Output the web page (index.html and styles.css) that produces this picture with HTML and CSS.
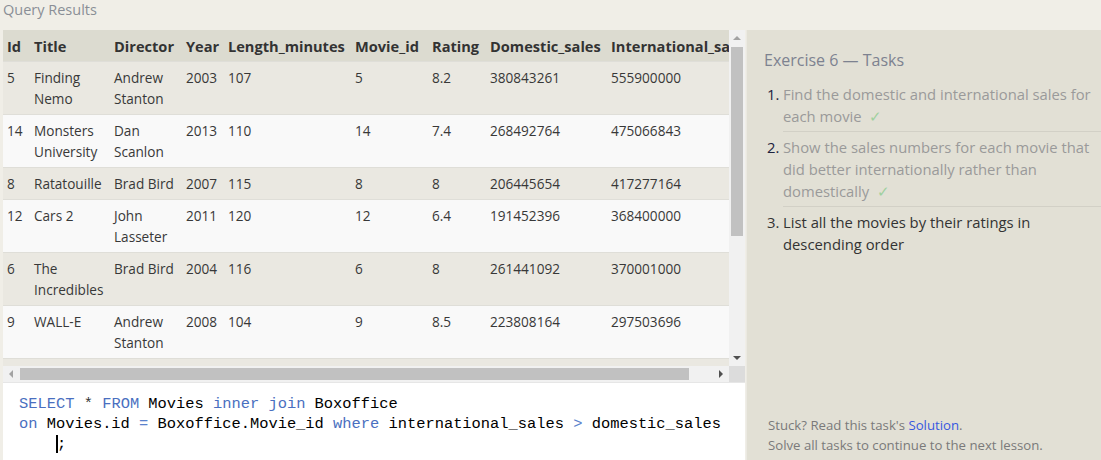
FILE: index.html
```html
<!DOCTYPE html>
<html>
<head>
<meta charset="utf-8">
<link rel="stylesheet" href="styles.css">
</head>
<body>
<div class="topbar">Query Results</div>
<div class="main">
  <div class="left">
    <div class="results">
      <div class="viewport">
        <table class="grid">
          <colgroup>
            <col class="c-id"><col class="c-title"><col class="c-dir"><col class="c-year"><col class="c-len"><col class="c-mid"><col class="c-rat"><col class="c-dom"><col class="c-int">
          </colgroup>
          <thead>
            <tr><th>Id</th><th>Title</th><th>Director</th><th>Year</th><th>Length_minutes</th><th>Movie_id</th><th>Rating</th><th>Domestic_sales</th><th>International_sales</th></tr>
          </thead>
          <tbody>
            <tr><td>5</td><td>Finding Nemo</td><td>Andrew Stanton</td><td>2003</td><td>107</td><td>5</td><td>8.2</td><td>380843261</td><td>555900000</td></tr>
            <tr><td>14</td><td>Monsters University</td><td>Dan Scanlon</td><td>2013</td><td>110</td><td>14</td><td>7.4</td><td>268492764</td><td>475066843</td></tr>
            <tr><td>8</td><td>Ratatouille</td><td>Brad Bird</td><td>2007</td><td>115</td><td>8</td><td>8</td><td>206445654</td><td>417277164</td></tr>
            <tr><td>12</td><td>Cars 2</td><td>John Lasseter</td><td>2011</td><td>120</td><td>12</td><td>6.4</td><td>191452396</td><td>368400000</td></tr>
            <tr><td>6</td><td>The Incredibles</td><td>Brad Bird</td><td>2004</td><td>116</td><td>6</td><td>8</td><td>261441092</td><td>370001000</td></tr>
            <tr><td>9</td><td>WALL-E</td><td>Andrew Stanton</td><td>2008</td><td>104</td><td>9</td><td>8.5</td><td>223808164</td><td>297503696</td></tr>
          </tbody>
        </table>
      </div>
      <div class="vbar">
        <div class="arrow up dim"></div>
        <div class="vtrack"><div class="vthumb"></div></div>
        <div class="arrow down"></div>
      </div>
      <div class="hbar">
        <div class="arrow leftarr dim"></div>
        <div class="htrack"><div class="hthumb"></div></div>
        <div class="arrow rightarr"></div>
      </div>
      <div class="corner"></div>
    </div>
    <div class="editor">
      <div class="line"><span class="kw">SELECT</span> <span class="op-dark">*</span> <span class="kw">FROM</span> Movies <span class="kw">inner join</span> Boxoffice</div>
      <div class="line"><span class="kw">on</span> Movies.id <span class="op">=</span> Boxoffice.Movie_id <span class="kw">where</span> international_sales <span class="op">&gt;</span> domestic_sales</div>
      <div class="line">    <span class="cursor"></span>;</div>
    </div>
  </div>
  <div class="right">
    <h2 class="ex-title">Exercise 6 — Tasks</h2>
    <ol class="tasks">
      <li class="task done"><span class="num">1.</span><div class="task-text">Find the domestic and international sales for each movie <span class="check">✓</span></div></li>
      <li class="task done"><span class="num">2.</span><div class="task-text">Show the sales numbers for each movie that did better internationally rather than domestically <span class="check">✓</span></div></li>
      <li class="task active"><span class="num">3.</span><div class="task-text">List all the movies by their ratings in descending order</div></li>
    </ol>
    <div class="help">
      <div>Stuck? Read this task's <a class="sol">Solution</a>.</div>
      <div>Solve all tasks to continue to the next lesson.</div>
    </div>
  </div>
</div>
</body>
</html>
```

FILE: styles.css
```css
* { box-sizing: border-box; }
html, body { margin: 0; padding: 0; }
body {
  width: 1101px;
  height: 460px;
  overflow: hidden;
  background: #f0eee7;
  font-family: "Open Sans", "Noto Sans", sans-serif;
  color: #333;
}
.topbar {
  height: 30px;
  padding: 0 3px;
  font-size: 14.5px;
  line-height: 20px;
  color: #8a8e96;
}
.main {
  display: flex;
  height: 430px;
}
.left {
  width: 746px;
  padding-left: 3px;
  padding-right: 1px;
  display: flex;
  flex-direction: column;
}
.results {
  display: grid;
  grid-template-columns: 726px 16px;
  grid-template-rows: 336px 16px;
  border-bottom: 1px solid #e6e6e6;
}
.viewport {
  overflow: hidden;
  background: #eae8e1;
}
.grid {
  border-collapse: collapse;
  table-layout: fixed;
  width: 766px;
  font-size: 13.6px;
  line-height: 21px;
}
.c-id { width: 27px; }
.c-title { width: 80px; }
.c-dir { width: 72px; }
.c-year { width: 42px; }
.c-len { width: 127px; }
.c-mid { width: 77px; }
.c-rat { width: 58px; }
.c-dom { width: 121px; }
.c-int { width: 162px; }
.grid th, .grid td {
  text-align: left;
  vertical-align: top;
  padding: 5px 4px;
  border-bottom: 1px solid #dfded8;
}
.grid th {
  background: #dcdbd0;
  font-weight: 700;
  font-size: 14.6px;
  line-height: 22px;
  padding: 5px 4px 4px;
  color: #333;
  white-space: nowrap;
  overflow: hidden;
}
.grid td { color: #383838; }
.grid tbody tr:nth-child(odd) td { background: #eae8e1; }
.grid tbody tr:nth-child(even) td { background: #f9f9f9; }

.vbar {
  background: #f1f1f1;
  display: flex;
  flex-direction: column;
  align-items: center;
}
.vtrack {
  flex: 1;
  width: 100%;
  padding: 0 2px;
}
.vthumb {
  margin-top: 1px;
  height: 189px;
  background: #c1c1c1;
}
.hbar {
  background: #f1f1f1;
  display: flex;
  align-items: center;
}
.htrack {
  flex: 1;
  height: 100%;
  padding: 2px 0;
}
.hthumb {
  margin-left: 1px;
  width: 669px;
  height: 100%;
  background: #c1c1c1;
}
.corner { background: #dcdcdc; }
.arrow {
  width: 16px;
  height: 16px;
  flex: none;
  display: flex;
  align-items: center;
  justify-content: center;
}
.arrow::before {
  content: "";
  width: 0;
  height: 0;
  border: 4px solid transparent;
}
.up::before { border-bottom-color: #505050; border-top-width: 0; }
.down::before { border-top-color: #505050; border-bottom-width: 0; }
.leftarr::before { border-right-color: #505050; border-left-width: 0; }
.rightarr::before { border-left-color: #505050; border-right-width: 0; }
.up.dim::before { border-bottom-color: #a3a3a3; }
.leftarr.dim::before { border-right-color: #a3a3a3; }

.editor {
  flex: 1;
  background: #fff;
  padding: 11px 16px 0;
  font-family: "Liberation Mono", "DejaVu Sans Mono", monospace;
  font-size: 15.4px;
  line-height: 20px;
  color: #000;
}
.line { white-space: pre; height: 20px; }
.kw { color: #4a6fc0; }
.op { color: #5a82cc; }
.op-dark { color: #333; }
.cursor {
  display: inline-block;
  width: 0;
  height: 18px;
  border-left: 2px solid #000;
  margin-right: -1px;
  vertical-align: -5px;
}

.right {
  flex: 1;
  background: #e2e0d5;
  border-left: 1px solid #ebe9e2;
  display: flex;
  flex-direction: column;
  padding: 19px 0 5px 17px;
}
.ex-title {
  margin: 0;
  font-size: 16px;
  font-weight: 400;
  line-height: 22px;
  color: #7d8290;
}
.tasks {
  list-style: none;
  margin: 8px 0 0;
  padding: 0;
}
.task {
  display: flex;
  font-size: 14.8px;
  line-height: 22px;
}
.num {
  width: 19px;
  flex: none;
  padding: 4px 0 0 3px;
  text-align: left;
  color: #1d2340;
}
.task-text {
  flex: 1;
  padding: 4px 2px 4px 0;
  border-bottom: 1px solid #d2d0c6;
}
.task.done .task-text { color: #9a9a9a; }
.task.active .task-text { color: #333; border-bottom: none; }
.task.active .num { color: #333; }
.check {
  color: #9fd09f;
  margin-left: 4px;
}
.help {
  margin-top: auto;
  padding-left: 4px;
  font-size: 13.2px;
  line-height: 20px;
  color: #7a7a7a;
}
.sol { color: #3758e0; text-decoration: none; }
```
